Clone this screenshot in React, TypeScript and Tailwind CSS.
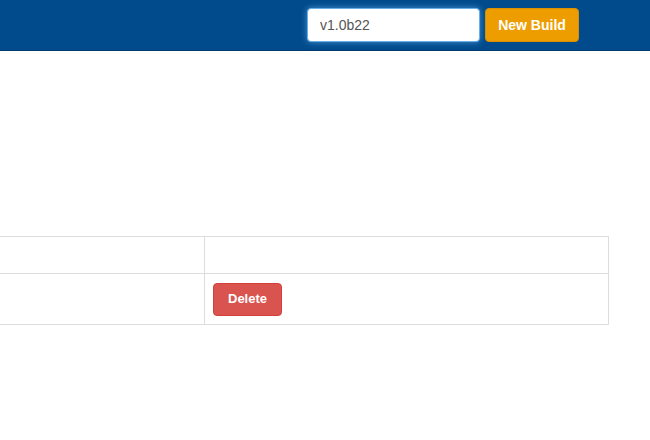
import { useState } from "react";

export default function App() {
    const [version, setVersion] = useState("v1.0b22");

    return (
        <div className="w-[650px] h-[440px] bg-white overflow-hidden" style={{ fontFamily: '"Liberation Sans", Arial, sans-serif' }}>
            {/* Navbar */}
            <div className="h-[51px] bg-[#014b8c] border-b border-[#013a6d] flex items-start justify-end pr-[71px] pt-2">
                <input
                    value={version}
                    onChange={(e) => setVersion(e.target.value)}
                    className="w-[173px] h-[34px] rounded-[4px] bg-white border border-[#66afe9] shadow-[0_0_6px_rgba(102,175,233,0.7)] px-3 text-[14px] text-[#555] outline-none"
                />
                <button className="ml-[5px] w-[94px] h-[34px] rounded-[4px] bg-[#ee9d00] border border-[#d88f00] text-white font-bold text-[14px]">
                    New Build
                </button>
            </div>

            {/* Builds table */}
            <div className="pt-[185px] pr-[41px] ml-[-20px]">
                <table className="w-full border-collapse border border-[#dddddd]">
                    <tbody>
                        <tr className="h-[37px]">
                            <td className="w-[224px] border border-[#dddddd]"></td>
                            <td className="border border-[#dddddd]"></td>
                        </tr>
                        <tr className="h-[51px]">
                            <td className="border border-[#dddddd]"></td>
                            <td className="border border-[#dddddd] px-2 align-middle">
                                <button className="h-[33px] px-[14px] rounded-[4px] bg-[#d9534f] border border-[#d43f3a] text-white font-bold text-[13px]">
                                    Delete
                                </button>
                            </td>
                        </tr>
                    </tbody>
                </table>
            </div>
        </div>
    );
}
